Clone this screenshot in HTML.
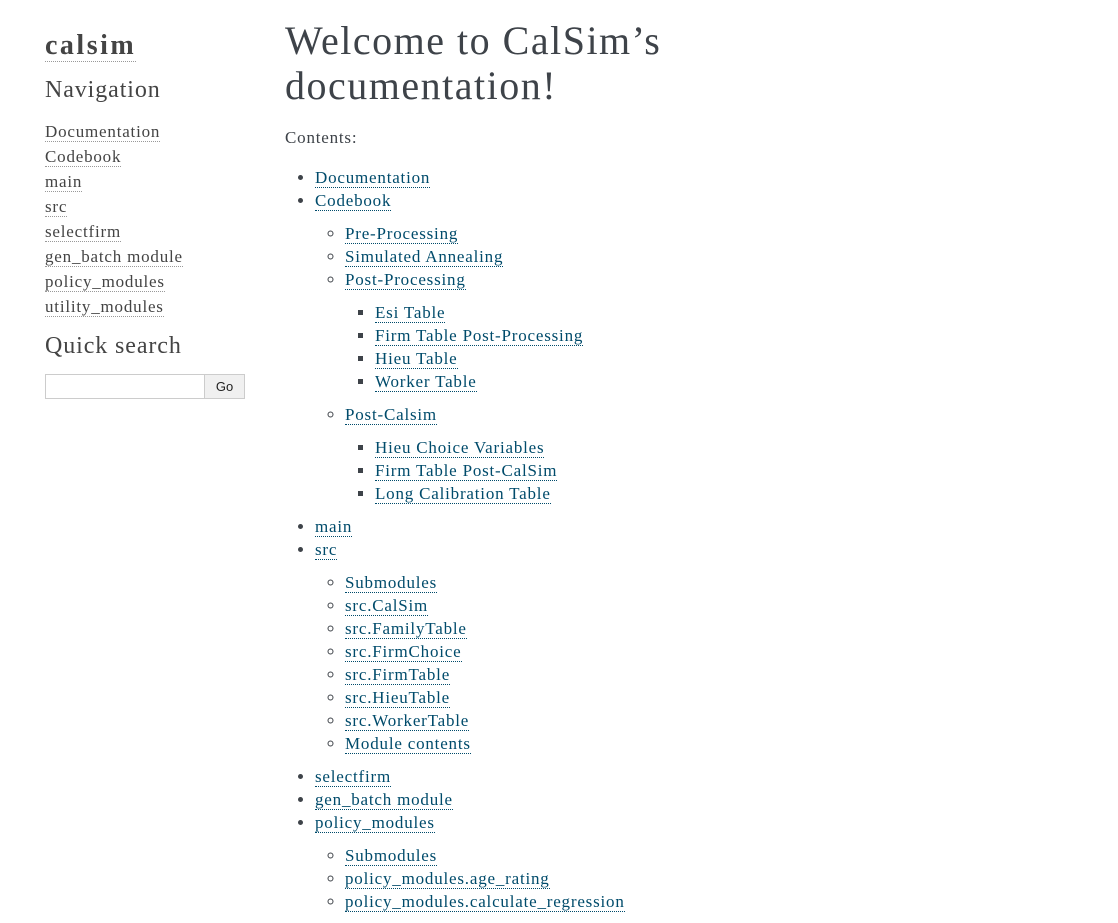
<!DOCTYPE html>
<html><head><meta charset="utf-8"><style>
body{margin:0;background:#fff;color:#3E4349;font-family:"Liberation Serif",Georgia,serif;font-size:17px;width:1118px;height:911px;overflow:hidden;position:relative;letter-spacing:0.8px}
a{color:#004B6B;text-decoration:none;border-bottom:1px dotted #004B6B}
.side a{color:#444;border-bottom:1px dotted #999}
.side{position:absolute;left:45px;top:0;width:200px}
.logo{position:absolute;top:28px;font-size:28px;font-weight:bold;line-height:36px;letter-spacing:2.5px}
.logo a{color:#444;border-bottom:1px dotted #999}
.h3{position:absolute;font-size:24px;color:#444;line-height:30px;letter-spacing:0.9px}
.nav{position:absolute;top:119px;line-height:25px;font-size:17px}
.search{position:absolute;top:374px;left:0;width:200px;height:25px;letter-spacing:0}
.search .in{position:absolute;left:0;top:0;width:158px;height:23px;border:1px solid #ccc;border-right:none}
.search .go{position:absolute;left:159px;top:0;width:39px;height:23px;border:1px solid #ccc;background:#f0f0f0;font-family:"Liberation Sans",sans-serif;font-size:13px;text-align:center;line-height:23px;color:#222}
.main{position:absolute;left:285px;top:0;width:800px}
h1{position:absolute;top:18px;margin:0;font-weight:normal;font-size:40px;line-height:45px;color:#3E4349;white-space:nowrap;letter-spacing:1.5px}
.contents{position:absolute;top:126px;line-height:23px}
ul{margin:0;padding-left:30px;line-height:23px}
.top{position:absolute;top:166px;left:0}
.top ul{margin:10px 0}
ul ul{list-style:circle}
ul ul ul{list-style:square}
li{margin:0}
</style></head><body>
<div class="side">
<div class="logo"><a>calsim</a></div>
<div class="h3" style="top:75px">Navigation</div>
<div class="nav">
<a>Documentation</a><br><a>Codebook</a><br><a>main</a><br><a>src</a><br><a>selectfirm</a><br><a>gen_batch module</a><br><a>policy_modules</a><br><a>utility_modules</a>
</div>
<div class="h3" style="top:331px">Quick search</div>
<div class="search"><div class="in"></div><div class="go">Go</div></div>
</div>
<div class="main">
<h1>Welcome to CalSim’s<br>documentation!</h1>
<div class="contents">Contents:</div>
<div class="top"><ul style="margin:0">
<li><a>Documentation</a></li>
<li><a>Codebook</a><ul>
<li><a>Pre-Processing</a></li>
<li><a>Simulated Annealing</a></li>
<li><a>Post-Processing</a><ul>
<li><a>Esi Table</a></li>
<li><a>Firm Table Post-Processing</a></li>
<li><a>Hieu Table</a></li>
<li><a>Worker Table</a></li></ul></li>
<li><a>Post-Calsim</a><ul>
<li><a>Hieu Choice Variables</a></li>
<li><a>Firm Table Post-CalSim</a></li>
<li><a>Long Calibration Table</a></li></ul></li>
</ul></li>
<li><a>main</a></li>
<li><a>src</a><ul>
<li><a>Submodules</a></li>
<li><a>src.CalSim</a></li>
<li><a>src.FamilyTable</a></li>
<li><a>src.FirmChoice</a></li>
<li><a>src.FirmTable</a></li>
<li><a>src.HieuTable</a></li>
<li><a>src.WorkerTable</a></li>
<li><a>Module contents</a></li></ul></li>
<li><a>selectfirm</a></li>
<li><a>gen_batch module</a></li>
<li><a>policy_modules</a><ul>
<li><a>Submodules</a></li>
<li><a>policy_modules.age_rating</a></li>
<li><a>policy_modules.calculate_regression</a></li></ul></li>
</ul></div>
</div>
</body></html>
